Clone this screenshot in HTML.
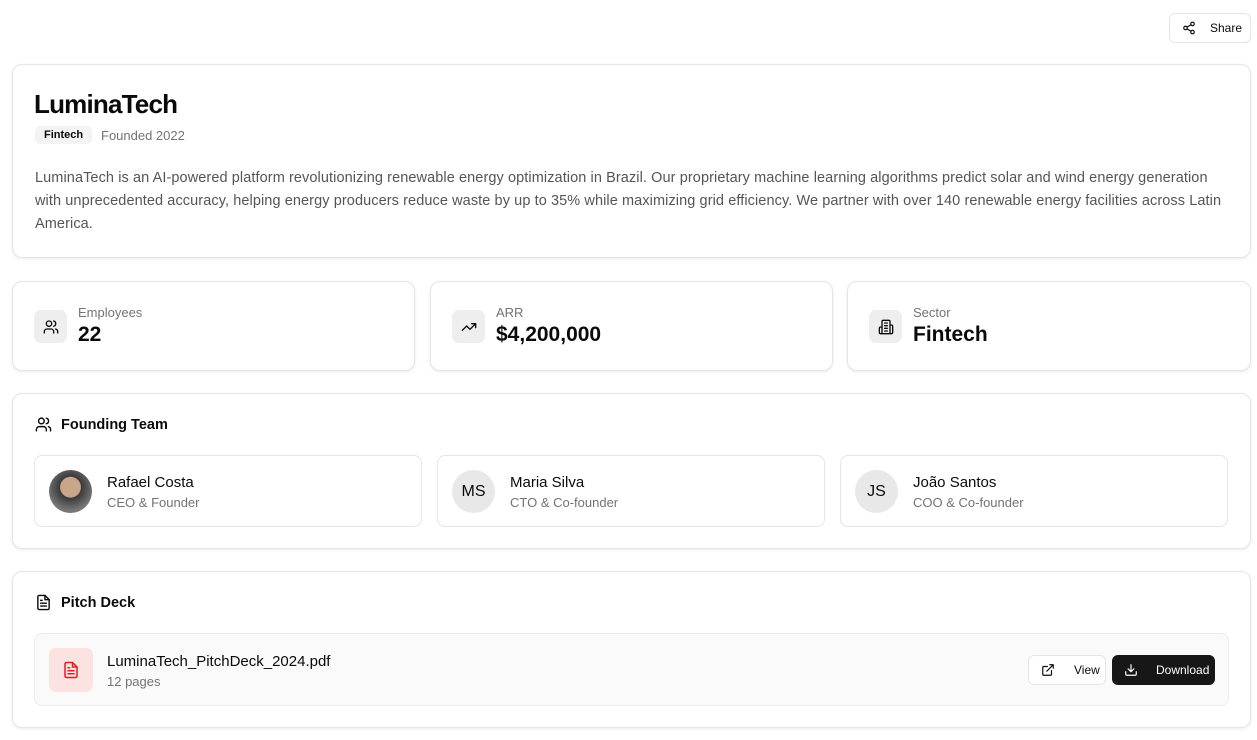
<!DOCTYPE html>
<html><head><style>
*{box-sizing:border-box;margin:0;padding:0}
body{width:1257px;height:740px;background:#fff;font-family:"Liberation Sans",sans-serif;color:#0a0a0a;position:relative;overflow:hidden}
.card{position:absolute;border:1px solid #e5e5e5;border-radius:10px;background:#fff;box-shadow:0 1px 3px rgba(0,0,0,.08)}
.ic{display:inline-flex;align-items:center;justify-content:center}
svg{fill:none;stroke:currentColor;stroke-width:2;stroke-linecap:round;stroke-linejoin:round}
.muted{color:#737373}
.stat .box{position:absolute;left:21px;top:28px;width:33px;height:33px;border-radius:7px;background:#eee}
.stat .lbl{position:absolute;left:65px;top:23px;font-size:13px;color:#737373}
.stat .val{position:absolute;left:65px;top:41px;font-size:21px;font-weight:bold}
.mem{position:absolute;top:455px;width:388px;height:72px;border:1px solid #e5e5e5;border-radius:8px}
.av{position:absolute;left:14px;top:14px;width:43px;height:43px;border-radius:50%;background:#e8e8e8;font-size:16px;display:flex;align-items:center;justify-content:center}
.mn{position:absolute;left:72px;top:18px;font-size:15px}
.mr{position:absolute;left:72px;top:39px;font-size:13px;color:#737373}
</style></head><body>
<div style="position:absolute;left:1169px;top:13px;width:82px;height:30px;border:1px solid #e5e5e5;border-radius:6px;font-size:12px;display:flex;align-items:center;padding-left:12px;gap:14px">
<svg width="14" height="14" viewBox="0 0 24 24"><circle cx="18" cy="5" r="3"/><circle cx="6" cy="12" r="3"/><circle cx="18" cy="19" r="3"/><path d="M8.6 13.5l6.8 4M15.4 6.5l-6.8 4"/></svg>Share</div>

<div class="card" style="left:12px;top:64px;width:1239px;height:194px">
<div style="position:absolute;left:21px;top:24px;font-size:26px;font-weight:bold;letter-spacing:-.8px">LuminaTech</div>
<div style="position:absolute;left:22px;top:61px;background:#f3f3f3;border-radius:5px;padding:3px 9px;font-size:11px;font-weight:bold">Fintech</div>
<div style="position:absolute;left:88px;top:63px;font-size:13px" class="muted">Founded 2022</div>
<div style="position:absolute;left:22px;top:102px;width:1202px;font-size:14.5px;letter-spacing:.09px;line-height:23px;color:#555">LuminaTech is an AI-powered platform revolutionizing renewable energy optimization in Brazil. Our proprietary machine learning algorithms predict solar and wind energy generation with unprecedented accuracy, helping energy producers reduce waste by up to 35% while maximizing grid efficiency. We partner with over 140 renewable energy facilities across Latin America.</div>
</div>

<div class="card stat" style="left:12px;top:281px;width:403px;height:90px"><div class="box ic"><svg width="16" height="16" viewBox="0 0 24 24"><path d="M16 21v-2a4 4 0 0 0-4-4H6a4 4 0 0 0-4 4v2"/><circle cx="9" cy="7" r="4"/><path d="M22 21v-2a4 4 0 0 0-3-3.9M16 3.1a4 4 0 0 1 0 7.8"/></svg></div><div class="lbl">Employees</div><div class="val">22</div></div>
<div class="card stat" style="left:430px;top:281px;width:403px;height:90px"><div class="box ic"><svg width="16" height="16" viewBox="0 0 24 24"><path d="M22 7l-8.5 8.5-5-5L2 17M16 7h6v6"/></svg></div><div class="lbl">ARR</div><div class="val">$4,200,000</div></div>
<div class="card stat" style="left:847px;top:281px;width:404px;height:90px"><div class="box ic"><svg width="16" height="16" viewBox="0 0 24 24"><path d="M6 22V4a2 2 0 0 1 2-2h8a2 2 0 0 1 2 2v18zM6 12H4a2 2 0 0 0-2 2v6a2 2 0 0 0 2 2h2M18 9h2a2 2 0 0 1 2 2v9a2 2 0 0 1-2 2h-2M10 6h4M10 10h4M10 14h4M10 18h4"/></svg></div><div class="lbl">Sector</div><div class="val">Fintech</div></div>

<div class="card" style="left:12px;top:393px;width:1239px;height:156px">
<div style="position:absolute;left:22px;top:22px;display:flex;align-items:center;gap:9px;font-size:14.5px;font-weight:bold"><svg width="17" height="17" viewBox="0 0 24 24"><path d="M16 21v-2a4 4 0 0 0-4-4H6a4 4 0 0 0-4 4v2"/><circle cx="9" cy="7" r="4"/><path d="M22 21v-2a4 4 0 0 0-3-3.9M16 3.1a4 4 0 0 1 0 7.8"/></svg>Founding Team</div>
</div>
<div class="mem" style="left:34px"><div class="av" style="background:radial-gradient(circle at 50% 40%,#c9a58a 0 30%,#3a3a3a 32%,#777 70%)"></div><div class="mn">Rafael Costa</div><div class="mr">CEO &amp; Founder</div></div>
<div class="mem" style="left:437px"><div class="av">MS</div><div class="mn">Maria Silva</div><div class="mr">CTO &amp; Co-founder</div></div>
<div class="mem" style="left:840px"><div class="av">JS</div><div class="mn">João Santos</div><div class="mr">COO &amp; Co-founder</div></div>

<div class="card" style="left:12px;top:571px;width:1239px;height:157px">
<div style="position:absolute;left:22px;top:22px;display:flex;align-items:center;gap:9px;font-size:14.5px;font-weight:bold"><svg width="17" height="17" viewBox="0 0 24 24"><path d="M14 2H6a2 2 0 0 0-2 2v16a2 2 0 0 0 2 2h12a2 2 0 0 0 2-2V8z"/><path d="M14 2v6h6M16 13H8M16 17H8M10 9H8"/></svg>Pitch Deck</div>
<div style="position:absolute;left:21px;top:61px;width:1195px;height:73px;background:#fafafa;border:1px solid #ececec;border-radius:8px">
<div class="ic" style="position:absolute;left:14px;top:14px;width:44px;height:44px;border-radius:7px;background:#fde2e2;color:#e11d1d"><svg width="18" height="18" viewBox="0 0 24 24"><path d="M14 2H6a2 2 0 0 0-2 2v16a2 2 0 0 0 2 2h12a2 2 0 0 0 2-2V8z"/><path d="M14 2v6h6M16 13H8M16 17H8M10 9H8"/></svg></div>
<div style="position:absolute;left:72px;top:19px;font-size:15px">LuminaTech_PitchDeck_2024.pdf</div>
<div style="position:absolute;left:72px;top:40px;font-size:13px" class="muted">12 pages</div>
<div style="position:absolute;left:993px;top:21px;width:78px;height:30px;background:#fff;border:1px solid #e5e5e5;border-radius:6px;font-size:12px;display:flex;align-items:center;padding-left:12px;gap:19px"><svg width="14" height="14" viewBox="0 0 24 24"><path d="M15 3h6v6M10 14L21 3M18 13v6a2 2 0 0 1-2 2H5a2 2 0 0 1-2-2V8a2 2 0 0 1 2-2h6"/></svg>View</div>
<div style="position:absolute;left:1077px;top:21px;width:103px;height:30px;background:#171717;color:#fff;border-radius:6px;font-size:12px;display:flex;align-items:center;padding-left:12px;gap:18px"><svg width="14" height="14" viewBox="0 0 24 24"><path d="M21 15v4a2 2 0 0 1-2 2H5a2 2 0 0 1-2-2v-4M7 10l5 5 5-5M12 15V3"/></svg>Download</div>
</div>
</div>
</body></html>
